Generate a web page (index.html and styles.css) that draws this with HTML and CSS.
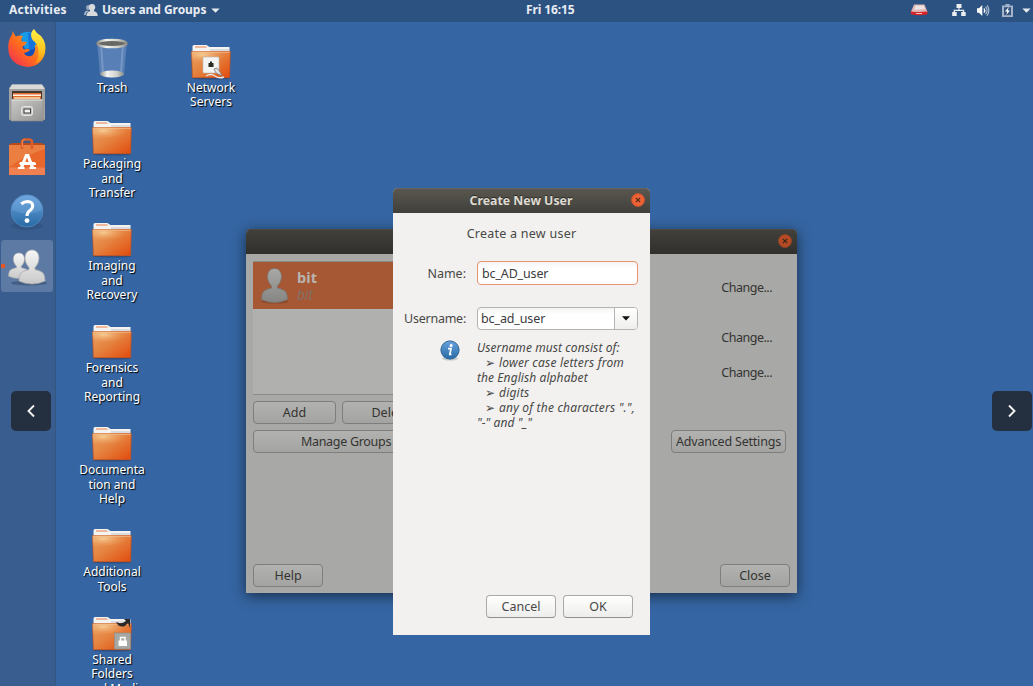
FILE: index.html
```
<!DOCTYPE html>
<html lang="en">
<head>
<meta charset="utf-8">
<title>Users and Groups</title>
<link rel="stylesheet" href="styles.css">
</head>
<body>
<svg width="0" height="0" class="defs">
  <defs>
    <linearGradient id="fold" x1="0" y1="0" x2="1" y2="1"><stop offset="0" stop-color="#e9a060"/><stop offset=".45" stop-color="#e58340"/><stop offset="1" stop-color="#e24a0c"/></linearGradient>
    <radialGradient id="glow" cx=".28" cy=".22" r=".6"><stop offset="0" stop-color="#f6d29a" stop-opacity=".9"/><stop offset="1" stop-color="#f0a060" stop-opacity="0"/></radialGradient>
    <linearGradient id="person" x1="0" y1="0" x2="0" y2="1"><stop offset="0" stop-color="#f6f6f6"/><stop offset="1" stop-color="#c9c9c9"/></linearGradient>
    <linearGradient id="dimperson" x1="0" y1="0" x2="0" y2="1"><stop offset="0" stop-color="#a8a8a6"/><stop offset="1" stop-color="#858583"/></linearGradient>
    <linearGradient id="blue" x1="0" y1="0" x2="0" y2="1"><stop offset="0" stop-color="#69a3de"/><stop offset="1" stop-color="#286aa4"/></linearGradient>
    <linearGradient id="steel" x1="0" y1="0" x2="1" y2="1"><stop offset="0" stop-color="#c9c9c7"/><stop offset="1" stop-color="#939391"/></linearGradient>
    <linearGradient id="fox" x1="0" y1="1" x2="1" y2="0"><stop offset="0" stop-color="#ee2560"/><stop offset=".45" stop-color="#ff6a1d"/><stop offset="1" stop-color="#ffc928"/></linearGradient>
    <linearGradient id="flame" x1="0" y1="0" x2="0" y2="1"><stop offset="0" stop-color="#fff04a"/><stop offset=".6" stop-color="#ffc51f"/><stop offset="1" stop-color="#ff8a18"/></linearGradient>
    <linearGradient id="rim" x1="0" y1="0" x2="1" y2="0"><stop offset="0" stop-color="#8d8d8a"/><stop offset=".3" stop-color="#f4f4f2"/><stop offset=".7" stop-color="#cfcfcc"/><stop offset="1" stop-color="#8d8d8a"/></linearGradient>
    <g id="folder">
      <ellipse cx="20" cy="34.3" rx="19" ry="1.2" fill="#1d3a66" opacity=".5"/>
      <path d="M1.500 8V2.500Q1.500 1 3 1H15.500L18.500 3H38.500V8z" fill="#f3f3f1"/>
      <path d="M4 2.200h11l1 1.600H4z" fill="#f0a67e"/>
      <path d="M19 5h19v2H19z" fill="#dcdce0"/>
      <path d="M.5 7.500H39.300L38.600 33.700H1.400z" fill="url(#fold)" stroke="#c4521d" stroke-width=".7"/>
      <path d="M.5 7.500H39.300L38.900 16Q22 15 1 21.500z" fill="url(#glow)"/>
      <path d="M1.300 8.300H38.700" stroke="#f3c193" stroke-width=".8"/>
    </g>
    <g id="bust"><path d="M13 0C8.500 0 6 3.400 6 8.200C6 12 8 15.500 10 17.500V19.500Q3.500 21 1.500 23.500Q0 26 0 31Q6 34 13 34T26 31Q26 26 24.500 23.500Q22.500 21 16 19.500V17.500C18 15.500 20 12 20 8.200C20 3.400 17.500 0 13 0z"/></g>
  </defs>
</svg>

<div class="screen">
  <header class="topbar">
    <span class="activities">Activities</span>
    <span class="appmenu">
      <svg width="14" height="15" viewBox="0 0 14 15"><g fill="#d7dadd"><circle cx="4.500" cy="4.500" r="2.500" opacity=".6"/><path d="M8 1a3 3.400 0 0 1 2 6.200v1.100q3.700.6 3.700 4.700H2.500Q2.500 8.900 6 8.300V7.200A3 3.400 0 0 1 8 1z"/><path d="M0 12q0-4 3-4.500L5 8q-3 1-3.200 4z" opacity=".7"/></g></svg>
      <span class="appname">Users and Groups</span>
      <svg width="9" height="5" viewBox="0 0 9 5"><path d="M.3 .4H8.700L4.500 4.800z" fill="#e6e9ee"/></svg>
    </span>
    <span class="clock">Fri 16:15</span>
    <span class="tray">
      <svg class="drive" width="18" height="12" viewBox="0 0 18 12"><path d="M4 .6H14.500L17.500 8H.8z" fill="#e0b4b4"/><path d="M5.500 1.500h8l1.500 3.800-11 .5z" fill="#eee4e4"/><path d="M.8 7.200 5 8.300l12.500-.8v2.700q-8 2-16.700 0z" fill="#d92525"/><path d="M6 9.500h6" stroke="#f5bcbc"/></svg>
      <svg class="net" width="14" height="12" viewBox="0 0 14 12" fill="#eceef0"><path d="M4.500 0h5v4h-2v1.700h4.700V8h1.500v4H9.200V8h1.700V7H3v1h1.700v4H.2V8h1.500V5.700h4.700V4H4.500z"/></svg>
      <svg class="vol" width="14" height="13" viewBox="0 0 14 13"><path d="M1 4.300h2L6.300 1v11L3 8.800H1z" fill="#fff"/><path d="M8 4.300q1.500 2.200 0 4.400" fill="none" stroke="#fff" stroke-width="1.300"/><path d="M9.600 2.700q3 3.800 0 7.600M11.200 1.300q3.300 5.200 0 10.400" fill="none" stroke="#a8b8ce" stroke-width="1.200"/></svg>
      <svg class="bat" width="11" height="13" viewBox="0 0 11 13"><path d="M3.500 0h4v1.500H11V13H0V1.500h3.500z" fill="#a3b3c9"/><path d="M2 3.200h7v8H2z" fill="#34547f"/><path d="M6.800 3 3 7.600h2.200L4.300 11 8 6.500H5.800z" fill="#fff"/></svg>
      <svg class="caret" width="9" height="5" viewBox="0 0 9 5"><path d="M.3 .4H8.700L4.500 4.800z" fill="#e6e9ee"/></svg>
    </span>
  </header>

  <main class="workspace">
    <nav class="dock">
      <div class="tile">
        <svg width="40" height="40" viewBox="0 0 40 40">
          <circle cx="20" cy="20" r="15" fill="#1550b5"/><path d="M13 6q9-5 16 1v12l-11 2z" fill="#179be8"/><path d="M21 5q6 0 8 4l-2 12-5 1z" fill="#1673dc"/>
          <path d="M6 3Q7 7 9 8.500Q12 7 16 8Q13.500 11 15 13.500L20 14Q19 17 15.500 18.500Q15.500 21 18 21.500Q21 20 23 22Q20 25 17 25Q19 29 24 28Q29 26 28 17Q31 18 30 10L32 7Q39 14 38 24Q35 38 21 39Q6 38 2 26Q0 17 3 10Q5 8 6 3z" fill="url(#fox)"/>
          <path d="M27 1Q29 5 34 8Q40 15 38 25Q36 33 28 36Q33 29 31 20Q30 15 25.500 12Q22 5 27 1z" fill="url(#flame)"/>
        </svg>
      </div>
      <div class="tile">
        <svg width="38" height="40" viewBox="0 0 38 40">
          <path d="M4 1.500H34L37 5V36Q37 37 36 37H2Q1 37 1 36V5z" fill="#a3a3a1"/><path d="M4 1.500H34L36.500 6H1.500z" fill="#d9d9d7"/>
          <path d="M4 8H34V18H4z" fill="#45372f"/><path d="M5 10H33V18H5z" fill="#df6c32"/><path d="M5 11.500H33V13H5z" fill="#fff3df"/><path d="M6 14H32V16H6z" fill="#f3c491"/>
          <path d="M3 16.500H35V38H3z" fill="url(#steel)" stroke="#8f8f8d" stroke-width=".6"/><path d="M3.500 17H34.500" stroke="#e5e5e3"/>
          <rect x="13.500" y="23.500" width="11" height="9" rx="2" fill="#c7c7c5" stroke="#e7e7e5"/><rect x="16" y="26" width="6.500" height="4" fill="#f2f2f0" stroke="#3b3b39"/>
        </svg>
      </div>
      <div class="tile">
        <svg width="38" height="40" viewBox="0 0 38 40">
          <path d="M1 8 4 6H34L37 8V11H1z" fill="#b94a19"/><path d="M1 8H37V38H1z" fill="#e9672a"/><path d="M1 8H37V12Q20 17 1 30z" fill="#ec8a4e" opacity=".65"/>
          <path d="M1 30.500H37V38H1z" fill="#f08050"/><path d="M14 12V5Q14 2.500 17 2.500H21Q24 2.500 24 5V12" fill="none" stroke="#dc5e2a" stroke-width="2.600"/><path d="M14.500 10V5Q14.500 2.500 17 2.500" fill="none" stroke="#f18150" stroke-width="1"/>
          <path d="M17.300 17H21L26 30H28V32H21.500V30H22.500L19 20.500 15.500 30H16.500V32H10V30H12z" fill="#fff"/><path d="M12 25H26Q28 25 28 27V28H12Q10.500 26.500 12 25z" fill="#fff"/>
        </svg>
      </div>
      <div class="tile">
        <svg width="36" height="38" viewBox="0 0 36 38"><ellipse cx="18" cy="33" rx="16" ry="4" fill="#28476f" opacity=".35"/><circle cx="18" cy="18" r="16" fill="url(#blue)" stroke="#4d86bd"/><path d="M2.500 17A15.500 15.500 0 0 1 33.500 17Q18 24 2.500 17z" fill="#7aade0" opacity=".35"/><path d="M12.300 11Q15 8.500 18.500 8.500Q23.700 8.700 23.700 13Q23.700 15.500 21 17.500Q18 19.500 18 23" fill="none" stroke="#fff" stroke-width="3.100"/><circle cx="18" cy="27.600" r="2.400" fill="#fff"/></svg>
      </div>
      <div class="tile active">
        <svg width="52" height="52" viewBox="0 0 52 52"><circle cx="2" cy="26" r="2.300" fill="#e95420"/><ellipse cx="28" cy="43" rx="18" ry="2.500" fill="#2c4468" opacity=".5"/><g fill="url(#person)" stroke="#a7a9ac" stroke-width=".8"><use href="#bust" transform="translate(7.500 13) scale(.8 .75)"/><use href="#bust" transform="translate(18 10)"/></g></svg>
      </div>
    </nav>

    <section class="icons">
      <div class="column">
        <figure class="item trash">
          <svg width="32" height="41" viewBox="0 0 32 41"><path d="M1 4 4 37Q16 42 28 37L31 4z" fill="#7598c6" opacity=".55"/><path d="M5 6 7 35M27 6 25 35" stroke="#aec3df" opacity=".35" stroke-width="2"/><ellipse cx="16" cy="36" rx="12" ry="3.500" fill="url(#rim)"/><ellipse cx="16" cy="5.500" rx="14.500" ry="3.600" fill="#686865" stroke="url(#rim)" stroke-width="2.400"/></svg>
          <figcaption>Trash</figcaption>
        </figure>
        <figure class="item"><svg width="40" height="36"><use href="#folder"/></svg><figcaption>Packaging<br>and<br>Transfer</figcaption></figure>
        <figure class="item"><svg width="40" height="36"><use href="#folder"/></svg><figcaption>Imaging<br>and<br>Recovery</figcaption></figure>
        <figure class="item"><svg width="40" height="36"><use href="#folder"/></svg><figcaption>Forensics<br>and<br>Reporting</figcaption></figure>
        <figure class="item"><svg width="40" height="36"><use href="#folder"/></svg><figcaption>Documenta<br>tion and<br>Help</figcaption></figure>
        <figure class="item"><svg width="40" height="36"><use href="#folder"/></svg><figcaption>Additional<br>Tools</figcaption></figure>
        <figure class="item"><svg width="40" height="36"><use href="#folder"/><path d="M24 6Q27 12 33 10L36 7 38 12V3H32L34 5Q30 8 27 7z" fill="#292929"/><rect x="22.500" y="17" width="16" height="16" fill="#a6a8a3" stroke="#8c8e89" stroke-width=".6"/><path d="M26.500 24.500H35V30H26.500z" fill="#fff"/><path d="M28.500 25V21.500H33V25" fill="none" stroke="#fff" stroke-width="1.500"/></svg><figcaption>Shared<br>Folders<br>and Medi</figcaption></figure>
      </div>
      <div class="column second">
        <figure class="item"><svg width="40" height="36"><use href="#folder"/><rect x="12" y="13" width="16" height="16" rx="1" fill="#f4f4f2" stroke="#bcbcb8" stroke-width=".7"/><path d="M17.500 23V19H19V17.500H21V19H22.500V23z" fill="#2c2b20"/><path d="M23 25 26 24 29 28 31 32 25 29z" fill="#e1e1df" stroke="#777" stroke-width=".8"/><path d="M15 32Q20 29 24 32T33 33" stroke="#e6e6e4" stroke-width="1.400" fill="none"/></svg><figcaption>Network<br>Servers</figcaption></figure>
      </div>
    </section>
  </main>

  <section class="window parent">
    <div class="titlebar"><span class="close"><svg width="14" height="14" viewBox="0 0 14 14"><circle cx="7" cy="7" r="6.500" fill="#b64a24" stroke="#8c4429"/><path d="M4.800 4.800 9.200 9.200M9.200 4.800 4.800 9.200" stroke="#33221b" stroke-width="1.100"/></svg></span></div>
    <div class="panel">
      <div class="left">
        <div class="list">
          <div class="user">
            <svg width="28" height="36" viewBox="0 0 28 36"><ellipse cx="14" cy="33.500" rx="13.500" ry="2" fill="#6c3a22" opacity=".5"/><use href="#bust" x=".5" y=".5" fill="url(#dimperson)" stroke="#7b736d" stroke-width=".8"/></svg>
            <div><b>bit</b><i>bit</i></div>
          </div>
        </div>
        <div class="pair"><span class="btn add">Add</span><span class="btn delete">Delete</span></div>
        <span class="btn manage">Manage Groups</span>
      </div>
      <div class="right">
        <span class="change">Change...</span><span class="change c2">Change...</span><span class="change c3">Change...</span>
        <span class="btn advanced">Advanced Settings</span>
      </div>
    </div>
    <div class="footer"><span class="btn">Help</span><span class="btn">Close</span></div>
  </section>

  <section class="window dialog">
    <div class="titlebar"><span class="caption">Create New User</span><span class="close"><svg width="14" height="14" viewBox="0 0 14 14"><circle cx="7" cy="7" r="6.500" fill="#ed6337" stroke="#bf502b"/><path d="M4.800 4.800 9.200 9.200M9.200 4.800 4.800 9.200" stroke="#4a2618" stroke-width="1.100"/></svg></span></div>
    <div class="form">
      <div class="intro">Create a new user</div>
      <label class="lname">Name:</label>
      <div class="entry focus">bc_AD_user</div>
      <label class="luser">Username:</label>
      <div class="combo"><span class="value">bc_ad_user</span><span class="drop"><svg width="8" height="5" viewBox="0 0 8 5"><path d="M0 .3H8L4 4.600z" fill="#111"/></svg></span></div>
      <svg class="info" width="20" height="21" viewBox="0 0 20 21"><ellipse cx="10" cy="18.500" rx="8" ry="2" fill="#9aa" opacity=".5"/><circle cx="10" cy="10" r="9.100" fill="url(#blue)" stroke="#2d6396"/><circle cx="11.100" cy="5.500" r="1.500" fill="#fff"/><path d="M8 8.600H11L9.800 14.500H11.500" fill="none" stroke="#fff" stroke-width="1.700"/></svg>
      <div class="hint"><p>Username must consist of:</p><p class="bullet"><s>➢</s>lower case letters from</p><p>the English alphabet</p><p class="bullet"><s>➢</s>digits</p><p class="bullet"><s>➢</s>any of the characters ".",</p><p>"-" and "_"</p></div>
    </div>
    <div class="actions"><span class="btn">Cancel</span><span class="btn">OK</span></div>
  </section>

  <div class="arrow prev"><svg width="10" height="14" viewBox="0 0 10 14"><path d="M8 1.500 2.500 7 8 12.500" fill="none" stroke="#f2f2f0" stroke-width="1.900"/></svg></div>
  <div class="arrow next"><svg width="10" height="14" viewBox="0 0 10 14"><path d="M2 1.500 7.500 7 2 12.500" fill="none" stroke="#f2f2f0" stroke-width="1.900"/></svg></div>
</div>
</body>
</html>
```

FILE: styles.css
```
* { box-sizing: border-box; }
body { margin: 0; font-family: "Noto Sans", "Open Sans", sans-serif; font-size: 12.5px; color: #3d3d3b; }
svg { display: block; flex: none; }
.defs { position: absolute; }
.screen { position: relative; width: 1033px; height: 686px; overflow: hidden; background: #3565a2; display: flex; flex-direction: column; }

.topbar { height: 22px; flex: none; background: #2c5282; color: #e9edf2; font-weight: bold; font-size: 12px; line-height: 20px; display: grid; grid-template-columns: 84px 442px 50px 1fr; white-space: nowrap; }
.activities { padding-left: 9px; letter-spacing: .2px; }
.appmenu { display: flex; align-items: center; height: 20px; }
.appname { margin: 0 -1px 0 4px; width: 110px; letter-spacing: -.12px; }
.clock { letter-spacing: -.1px; }
.appname { letter-spacing: -.05px; }
.tray { display: flex; align-items: center; height: 20px; padding-left: 334px; }
.drive { margin-right: 24px; }
.net { margin-right: 10px; }
.vol { margin-right: 12px; }
.bat { margin-right: 9px; }

.workspace { flex: 1; display: flex; min-height: 0; }
.dock { width: 56px; background: #395d8e; border-right: 1px solid #345782; display: flex; flex-direction: column; align-items: flex-start; gap: 2.500px; flex: none; }
.tile { width: 54px; height: 52px; flex: none; display: flex; align-items: center; justify-content: center; }
.tile.active { width: 52px; margin-left: 1px; background: #5c7aa3; border-radius: 3px; }

.icons { display: flex; color: #fff; text-shadow: 1px 1px 1px #000; font-size: 12px; line-height: 14.300px; text-align: center; }
.column { width: 112px; padding-top: 16px; display: flex; flex-direction: column; gap: 23.100px; }
.second { width: 86px; padding-top: 22px; }
.item { margin: 0; display: flex; flex-direction: column; align-items: center; white-space: nowrap; }
.item svg { margin-left: -1px; margin-bottom: 1px; }
.item + .item { margin-top: -1px; }
.second .item svg { margin-left: 0; }
.trash { margin-bottom: 3px; }
.item.trash svg { margin-bottom: 2px; }

.window { position: absolute; border-radius: 5px 5px 0 0; display: flex; flex-direction: column; }
.titlebar { height: 25px; flex: none; display: flex; align-items: center; border-radius: 5px 5px 0 0; background: linear-gradient(#5a5850, #403f3a); box-shadow: inset 0 1px 0 #66645c; padding-bottom: 1px; }
.close { margin-left: auto; margin-right: 5px; }
.btn { height: 23px; border: 1px solid #7e7e7c; border-radius: 4px; display: flex; align-items: center; justify-content: center; white-space: nowrap; background: linear-gradient(#b2b2b0, #a3a3a1); padding-bottom: 1px; }

.parent { left: 246px; top: 229px; width: 551px; height: 364px; background: #a8a8a6; color: #343432; box-shadow: 0 3px 14px rgba(0,0,0,.55); }
.parent .titlebar { background: linear-gradient(#42413b, #302f2c); box-shadow: inset 0 1px 0 #4b4943; }
.panel { flex: 1; display: flex; justify-content: space-between; padding: 7px 11px 0 7px; }
.left { width: 186px; display: flex; flex-direction: column; gap: 6px; }
.list { height: 134px; border: 1px solid #8a8a88; background: #b0b0ae; border-left: 0; }
.user { height: 47px; background: #a65733; display: flex; align-items: flex-start; gap: 8px; padding: 6px 0 0 8px; color: #b8b4b0; }
.user b, .user i { display: block; line-height: 18px; }
.user b { font-size: 14.500px; letter-spacing: .1px; }
.user i { color: #857069; font-size: 13.500px; }
.pair { display: flex; gap: 6px; }
.add { width: 83px; }
.delete { width: 97px; }
.manage { letter-spacing: -.3px; padding-bottom: 0; }
.right { width: 115px; display: flex; flex-direction: column; }
.change { margin: 17px 14px 0 auto; line-height: 20px; letter-spacing: -.5px; }
.change.c2 { margin-top: 30px; }
.change.c3 { margin-top: 15px; }
.advanced { margin-top: 47px; letter-spacing: -.2px; padding-bottom: 0; }
.footer { display: flex; justify-content: space-between; padding: 0 7px 6px 7px; }
.footer .btn, .actions .btn { width: 70px; }

.dialog { left: 393px; top: 188px; width: 257px; height: 447px; background: #f2f1f0; color: #484846; }
.caption { flex: 1; text-align: center; color: #dfdbd2; font-weight: bold; font-size: 12.300px; padding-left: 18px; text-shadow: 0 -1px 0 #2b2a27; }
.dialog .btn { border-color: #a9a9a7; border-bottom-color: #8f8f8d; background: linear-gradient(#fff, #ededeb); }
.form { flex: 1; display: grid; grid-template-columns: 73px 161px; column-gap: 11px; grid-template-rows: 48px 24px 22px 23px 10px auto; }
.intro { grid-column: 1 / 3; padding-top: 11px; width: 257px; text-align: center; line-height: 19px; letter-spacing: .25px; }
.lname, .luser { text-align: right; line-height: 23px; }
.lname { grid-row: 2; padding-top: 1px; }
.luser { grid-row: 4; letter-spacing: -.25px; }
.entry, .combo { border: 1px solid #b4b4b2; border-radius: 4px; background: linear-gradient(#f4f4f4, #fff 30%); line-height: 22px; color: #3c3c3c; }
.entry { grid-row: 2; grid-column: 2; padding: 1px 0 0 4px; letter-spacing: -.15px; }
.focus { border-color: #e79472; }
.combo { grid-row: 4; grid-column: 2; display: flex; line-height: 21px; letter-spacing: -.12px; }
.value { flex: 1; padding-left: 3px; }
.drop { width: 23px; border-left: 1px solid #b4b4b2; display: flex; align-items: center; justify-content: center; background: linear-gradient(#fff, #efefed); border-radius: 0 3px 3px 0; }
.info { grid-row: 6; grid-column: 1; justify-self: end; margin-right: 6px; }
.hint { grid-row: 6; grid-column: 2; padding-top: 1px; font-style: italic; font-size: 12px; line-height: 14.900px; letter-spacing: .08px; white-space: nowrap; }
.hint p { margin: 0; }
.bullet { display: flex; padding-left: 8px; letter-spacing: .2px; }
.bullet s { text-decoration: none; font: 12px/14.900px "DejaVu Sans", sans-serif; width: 14px; }
.actions { display: flex; gap: 7px; padding: 0 17px 17px 93px; }

.arrow { position: absolute; top: 391px; width: 40px; height: 40px; border-radius: 5px; background: #243040; display: flex; align-items: center; justify-content: center; }
.prev { left: 11px; }
.next { left: 992px; }
```
